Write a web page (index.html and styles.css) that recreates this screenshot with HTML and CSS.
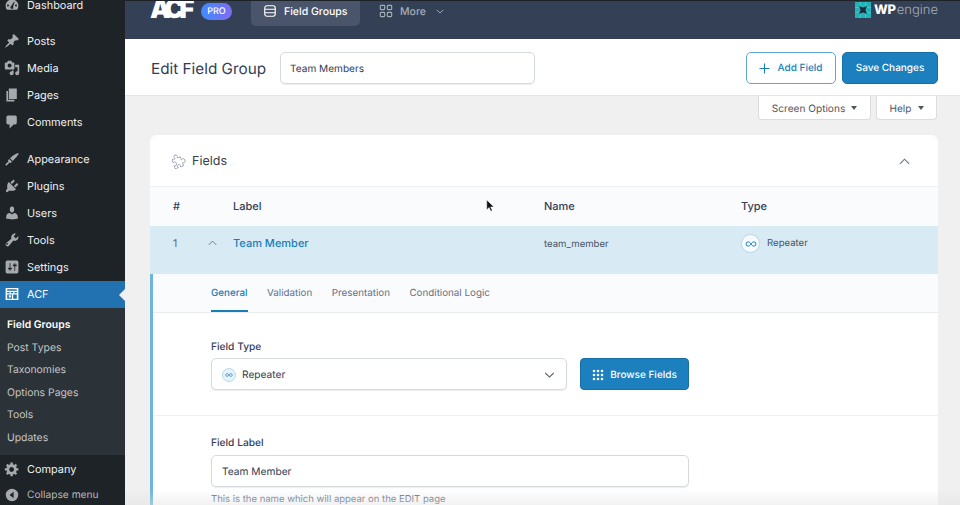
FILE: index.html
```html
<!DOCTYPE html>
<html lang="en">
<head>
    <meta charset="UTF-8">
    <title>Edit Field Group</title>
    <link rel="stylesheet" href="styles.css">
</head>
<body>
    <aside class="sidebar">
        <ul class="menu">
            <li class="menu-item"><svg viewBox="0 0 20 20"><path d="M10 3C5.600 3 2 6.600 2 11c0 1.900.7 3.700 1.800 5h12.400c1.100-1.300 1.800-3.100 1.800-5 0-4.400-3.600-8-8-8zM5 12a1.300 1.300 0 1 1 0-2.600A1.300 1.300 0 0 1 5 12zm5 3a2 2 0 0 1-1-3.700l3.500-5.300.8.400-2 5.800A2 2 0 0 1 10 15zm5-3a1.300 1.300 0 1 1 0-2.600 1.300 1.300 0 0 1 0 2.600z"/></svg>Dashboard</li>
            <li class="menu-sep"></li>
            <li class="menu-item"><svg viewBox="0 0 20 20"><path d="M10.440 3.020l1.820-1.820 6.360 6.350-1.830 1.820c-1.050-.68-2.480-.57-3.410.36l-.75.75c-.92.930-1.040 2.350-.35 3.410l-1.830 1.820-2.410-2.410-2.800 2.790c-.42.420-3.380 2.710-3.800 2.290s1.860-3.390 2.280-3.810l2.790-2.790L4.100 9.360l1.830-1.820c1.050.69 2.480.57 3.400-.36l.75-.75c.93-.92 1.050-2.350.36-3.410z"/></svg>Posts</li>
            <li class="menu-item"><svg viewBox="0 0 20 20"><path d="M13 11V4c0-.55-.45-1-1-1h-1.670L9 1H5L3.670 3H2c-.55 0-1 .45-1 1v7c0 .55.45 1 1 1h10c.55 0 1-.45 1-1zM7 4.500c1.380 0 2.500 1.120 2.500 2.500S8.380 9.500 7 9.500 4.500 8.380 4.500 7 5.620 4.500 7 4.500zM14 6h5v10.500c0 1.380-1.120 2.500-2.500 2.500S14 17.880 14 16.500s1.120-2.500 2.500-2.500c.17 0 .34.020.5.050V9h-3V6zm-4 8.050V13h2v3.500c0 1.380-1.120 2.500-2.500 2.500S7 17.880 7 16.500 8.120 14 9.500 14c.17 0 .34.020.5.050z"/></svg>Media</li>
            <li class="menu-item"><svg viewBox="0 0 20 20"><path d="M6 15V2h10v13H6zm-1 1h8v2H3V5h2v11z"/></svg>Pages</li>
            <li class="menu-item"><svg viewBox="0 0 20 20"><path d="M5 2h9c1.100 0 2 .9 2 2v7c0 1.100-.9 2-2 2h-2l-5 5v-5H5c-1.100 0-2-.9-2-2V4c0-1.100.9-2 2-2z"/></svg>Comments</li>
            <li class="menu-sep"></li>
            <li class="menu-item"><svg viewBox="0 0 20 20"><path d="M17.500 2.500l1 1C17 5.500 16 7.500 14 9l-3 3.500L7.500 9 11 6c2-1.500 4-2.500 6.500-3.500zM6.500 10l3.500 3.500L8.500 15 7 14.500l-4 4L1.500 17l4-4-.5-1.500z"/></svg>Appearance</li>
            <li class="menu-item"><svg viewBox="0 0 20 20"><path d="M13.110 4.360L9.870 7.600 8 5.730l3.240-3.240c.35-.34 1.050-.2 1.560.32.52.51.66 1.210.31 1.550zm-8 1.770l.91-1.120 9.010 9.010-1.190.84c-.71.710-2.630 1.160-3.820 1.160H6.140L4.900 17.260c-.59.590-1.540.59-2.120 0-.59-.58-.59-1.530 0-2.120l1.240-1.240v-3.880c0-1.130.41-3.050 1.120-3.760zm7.260 3.970l3.240-3.240c.34-.35 1.040-.21 1.550.31.52.51.66 1.210.31 1.550l-3.240 3.250z"/></svg>Plugins</li>
            <li class="menu-item"><svg viewBox="0 0 20 20"><path d="M10 9.250c-2.270 0-2.730-3.440-2.730-3.440C7 4.020 7.820 2 9.970 2c2.160 0 2.980 2.020 2.710 3.810 0 0-.41 3.440-2.680 3.440zm0 2.570L12.720 10c2.390 0 4.520 2.330 4.520 4.530v2.490s-3.650 1.130-7.240 1.130c-3.650 0-7.240-1.130-7.240-1.130v-2.490c0-2.250 1.940-4.480 4.430-4.480z"/></svg>Users</li>
            <li class="menu-item"><svg viewBox="0 0 20 20"><path d="M16.680 9.770c-1.340 1.340-3.300 1.670-4.950.99l-5.410 6.520c-.99.99-2.590.99-3.570 0-.99-.98-.99-2.580 0-3.570l6.520-5.420c-.68-1.650-.35-3.610.99-4.950 1.280-1.280 3.120-1.620 4.720-1.060l-2.890 2.890 2.820 2.820 2.860-2.870c.53 1.580.18 3.390-1.090 4.650zM4.660 15.610c.43-.43.43-1.120 0-1.560-.43-.43-1.120-.43-1.560 0-.43.43-.43 1.120 0 1.560.43.42 1.130.42 1.560 0z"/></svg>Tools</li>
            <li class="menu-item"><svg viewBox="0 0 20 20"><path d="M18 16V4c0-1.100-.9-2-2-2H4c-1.100 0-2 .9-2 2v12c0 1.100.9 2 2 2h12c1.100 0 2-.9 2-2zM8 11h1c.55 0 1 .45 1 1s-.45 1-1 1H8v1.500c0 .28-.22.5-.5.5s-.5-.22-.5-.5V13H6c-.55 0-1-.45-1-1s.45-1 1-1h1V5.500c0-.28.22-.5.5-.5s.5.22.5.5V11zm5-2h-1c-.55 0-1-.45-1-1s.45-1 1-1h1V5.500c0-.28.22-.5.5-.5s.5.22.5.5V7h1c.55 0 1 .45 1 1s-.45 1-1 1h-1v5.500c0 .28-.22.5-.5.5s-.5-.22-.5-.5V9z"/></svg>Settings</li>
            <li class="menu-item current"><svg viewBox="0 0 20 20"><path fill-rule="evenodd" d="M2 2.500h16v15H2zM4 7.500v1.500h3V7.500zm4.500 0v1.500h3V7.500zM13 7.500v1.500h3V7.500zM4 10.500V16h6v-5.500zm7.500 0V16H16v-5.500zM4 4v2h12V4zm2 7.500h3v3H6z"/></svg>ACF</li>
            <li>
                <ul class="submenu">
                    <li class="active">Field Groups</li>
                    <li>Post Types</li>
                    <li>Taxonomies</li>
                    <li>Options Pages</li>
                    <li>Tools</li>
                    <li>Updates</li>
                </ul>
            </li>
            <li class="menu-item"><svg viewBox="0 0 20 20"><path d="M18 12h-2.180c-.17.7-.44 1.350-.81 1.930l1.540 1.540-2.100 2.100-1.540-1.540c-.58.36-1.230.64-1.910.81V19H8v-2.180c-.68-.17-1.330-.45-1.910-.81l-1.540 1.540-2.120-2.120 1.540-1.540c-.36-.58-.64-1.230-.81-1.910H1V9.030h2.170c.17-.7.45-1.350.81-1.930L2.430 5.560l2.120-2.120L6.100 4.990c.58-.36 1.230-.64 1.900-.81V2h3v2.180c.68.17 1.330.45 1.910.81l1.540-1.540 2.120 2.120-1.540 1.540c.36.58.64 1.230.81 1.910H18V12zm-8.500 1.500c1.660 0 3-1.340 3-3s-1.340-3-3-3-3 1.340-3 3 1.340 3 3 3z"/></svg>Company</li>
            <li class="menu-item collapse"><svg viewBox="0 0 20 20"><path fill-rule="evenodd" d="M10 2.200a7.800 7.800 0 1 1 0 15.600 7.800 7.800 0 0 1 0-15.600zM12 6l-5 4 5 4z"/></svg>Collapse menu</li>
        </ul>
    </aside>

    <main class="main">
        <div class="topbar">
            <div class="brand">ACF</div>
            <span class="pro">PRO</span>
            <a class="nav-tab active">
                <svg viewBox="0 0 16 16" class="nav-icon"><rect x="2" y="2" width="12" height="12" rx="2.500"/><path d="M2 6h12M2 10h12"/></svg>
                Field Groups
            </a>
            <a class="nav-tab more">
                <svg viewBox="0 0 16 16" class="nav-icon"><rect x="1.500" y="1.500" width="5" height="5" rx="1"/><rect x="9.500" y="1.500" width="5" height="5" rx="1"/><rect x="1.500" y="9.500" width="5" height="5" rx="1"/><rect x="9.500" y="9.500" width="5" height="5" rx="1"/></svg>
                More
                <svg viewBox="0 0 10 6" class="more-caret"><path d="M1 1l4 4 4-4"/></svg>
            </a>
            <div class="wpe">
                <svg viewBox="0 0 16 16" class="wpe-mark"><rect width="16" height="16" fill="#1fb3b8"/><path d="M5.300 0v16M10.700 0v16M0 5.300h16M0 10.700h16" stroke="#5ad6d6" stroke-width=".6"/><path d="M4 4l4 1.500L12 4l-1.500 4 1.500 4-4-1.500L4 12l1.500-4z" fill="#1f2b3a"/></svg>
                <b>WP</b><span>engine</span>
            </div>
        </div>

        <header class="page-head">
            <h1>Edit Field Group</h1>
            <div class="title-input">Team Members</div>
            <a class="btn-outline"><svg viewBox="0 0 12 12"><path d="M6 .5v11M.5 6h11"/></svg>Add Field</a>
            <a class="btn-primary">Save Changes</a>
        </header>

        <div class="screen-links">
            <a class="screen-link screen-options">Screen Options<i></i></a>
            <a class="screen-link help">Help<i></i></a>
        </div>

        <section class="card">
            <div class="card-head">
                <svg viewBox="0 0 20 20" class="puzzle"><path transform="rotate(-20 10 10)" d="M3.500 6H7.500C6.500 3.500 6.500 2 9 2s2.500 1.500 1.500 4h4v4c2.500-1 4-.5 4 2s-1.500 3-4 2v4h-4c1-2.500.5-3.500-1.500-3.500s-2.500 1-1.500 3.500h-4v-4c2.500 1 3.500 0 3.500-2s-1-3-3.500-2z"/></svg>
                <h2>Fields</h2>
                <svg viewBox="0 0 12 7" class="chevron card-toggle"><path d="M1 6l5-5 5 5"/></svg>
            </div>

            <div class="field-row field-thead">
                <span>#</span>
                <span>Label</span>
                <span>Name</span>
                <span>Type</span>
            </div>

            <div class="field-row field-open">
                <span class="field-num">1</span>
                <span class="field-label"><svg viewBox="0 0 12 7" class="chevron"><path d="M1 6l5-5 5 5"/></svg>Team Member</span>
                <span class="field-name">team_member</span>
                <span class="field-type">
                    <span class="type-icon"><svg viewBox="0 0 16 8"><path d="M8 4C6.800 2.200 5.700 1.200 4.200 1.200a2.800 2.800 0 0 0 0 5.600C5.700 6.800 6.800 5.800 8 4c1.200-1.800 2.300-2.800 3.800-2.800a2.800 2.800 0 0 1 0 5.600C10.300 6.800 9.200 5.800 8 4z"/></svg></span>
                    Repeater
                </span>
            </div>

            <div class="settings">
                <nav class="tabs">
                    <a class="tab active">General</a>
                    <a class="tab">Validation</a>
                    <a class="tab">Presentation</a>
                    <a class="tab">Conditional Logic</a>
                </nav>

                <div class="setting setting-type">
                    <label>Field Type</label>
                    <div class="type-row">
                        <div class="select">
                            <span class="type-icon small"><svg viewBox="0 0 16 8"><path d="M8 4C6.800 2.200 5.700 1.200 4.200 1.200a2.800 2.800 0 0 0 0 5.600C5.700 6.800 6.800 5.800 8 4c1.200-1.800 2.300-2.800 3.800-2.800a2.800 2.800 0 0 1 0 5.600C10.300 6.800 9.200 5.800 8 4z"/></svg></span>
                            Repeater
                            <svg viewBox="0 0 12 7" class="chevron select-caret"><path d="M1 1l5 5 5-5"/></svg>
                        </div>
                        <a class="btn-browse">
                            <svg viewBox="0 0 12 12"><g><circle cx="2" cy="2" r="1.300"/><circle cx="6" cy="2" r="1.300"/><circle cx="10" cy="2" r="1.300"/><circle cx="2" cy="6" r="1.300"/><circle cx="6" cy="6" r="1.300"/><circle cx="10" cy="6" r="1.300"/><circle cx="2" cy="10" r="1.300"/><circle cx="6" cy="10" r="1.300"/><circle cx="10" cy="10" r="1.300"/></g></svg>
                            Browse Fields
                        </a>
                    </div>
                </div>

                <div class="setting setting-label">
                    <label>Field Label</label>
                    <div class="text-input">Team Member</div>
                    <p class="hint">This is the name which will appear on the EDIT page</p>
                </div>
            </div>
        </section>
    </main>

    <!-- screen recording leftovers -->
    <svg viewBox="0 0 12 18" class="cursor"><path d="M1 1v13l3.200-3 2.200 5 2-.9-2.200-4.900H10.500z"/></svg>
    <div class="bottom-fade"></div>
</body>
</html>
```

FILE: styles.css
```css
* {
    box-sizing: border-box;
}

html, body {
    height: 505px;
}

body {
    margin: 0;
    display: flex;
    overflow: hidden;
    background-color: #f0f0f1;
    color: #344054;
    font-family: Inter, "Liberation Sans", sans-serif;
    font-size: 11px;
    text-rendering: geometricPrecision;
}

ul {
    list-style: none;
    margin: 0;
    padding: 0;
}

/* sidebar */
.sidebar {
    width: 125px;
    flex-shrink: 0;
    height: 505px;
    overflow: hidden;
    background-color: #1d2327;
    color: #f0f0f1;
}

.menu {
    margin-top: -9px;
}

.menu-item {
    display: flex;
    align-items: center;
    height: 27.2px;
    padding-left: 4px;
    font-size: 10.9px;
    color: #eef0f1;
}

.menu-item svg {
    width: 16px;
    height: 16px;
    margin-right: 7px;
    fill: #a7aaad;
    flex-shrink: 0;
}

.menu-sep {
    height: 9px;
}

.menu-item.current {
    position: relative;
    background-color: #2271b1;
    color: #fff;
}

.menu-item.current svg {
    fill: #fff;
}

.menu-item.current::after {
    content: "";
    position: absolute;
    right: 0;
    top: 8px;
    border: 6px solid transparent;
    border-right-color: #f0f0f1;
    border-left-width: 0;
}

.submenu {
    background-color: #2c3338;
    height: 147px;
    padding: 6px 0 0 7px;
    font-size: 10.4px;
    color: #c3c4c7;
}

.submenu li {
    height: 22.5px;
    line-height: 22.5px;
}

.submenu .active {
    color: #fff;
    font-weight: 600;
}

.collapse {
    margin-top: -1px;
    color: #b4b9be;
    font-size: 10.2px;
}

/* top bar */
.main {
    flex: 1;
    min-width: 0;
}

.topbar {
    display: flex;
    height: 39px;
    background-color: #344055;
    border-top: 1px solid #1d2327;
    color: #fff;
    overflow: hidden;
}

.brand {
    width: 42px;
    height: 28px;
    margin: -5px 0 0 25px;
    font-size: 26px;
    line-height: 28px;
    font-weight: 900;
    letter-spacing: -4.8px;
}

.pro {
    width: 31px;
    height: 17px;
    margin: 2px 0 0 9px;
    border-radius: 9px;
    background: linear-gradient(90deg, #3e8bff, #7f6bf0);
    font-size: 9px;
    font-weight: 500;
    line-height: 17px;
    text-align: center;
}

.nav-tab {
    display: flex;
    align-items: center;
    gap: 7px;
    height: 25px;
    padding: 0 12px 5px;
    font-size: 10.5px;
    font-weight: 500;
    white-space: nowrap;
}

.nav-tab.active {
    width: 109px;
    margin-left: 19px;
    background-color: #4a556c;
    border-radius: 0 0 5px 5px;
}

.nav-tab.more {
    padding-left: 19px;
    color: #a5adbb;
}

.nav-icon {
    width: 14px;
    height: 14px;
    fill: none;
    stroke: currentColor;
    stroke-width: 1.300;
}

.more-caret {
    width: 8px;
    height: 5px;
    margin-left: 3px;
    fill: none;
    stroke: currentColor;
    stroke-width: 1.200;
}

.wpe {
    display: flex;
    align-items: center;
    gap: 3px;
    margin: 0 22px 0 auto;
    height: 18px;
    font-size: 13px;
}

.wpe-mark {
    width: 16px;
    height: 16px;
}

.wpe b {
    font-weight: 800;
    letter-spacing: -.2px;
}

.wpe span {
    margin-left: -2px;
    color: #a5adbb;
    font-weight: 300;
}

/* page header */
.page-head {
    display: flex;
    align-items: center;
    height: 57px;
    padding: 1px 22px 0 26px;
    background-color: #fff;
    border-bottom: 1px solid #e4e5e7;
}

h1 {
    width: 129px;
    margin: 1px 0 0;
    font-size: 15.3px;
    font-weight: 400;
    color: #344054;
    white-space: nowrap;
}

.title-input {
    width: 255px;
    height: 32px;
    padding-left: 9px;
    border: 1px solid #d5d9e0;
    border-radius: 5px;
    box-shadow: 0 1px 1px rgba(16, 24, 40, .08);
    font-size: 10.1px;
    line-height: 32px;
}

.btn-outline, .btn-primary {
    display: flex;
    align-items: center;
    justify-content: center;
    height: 32px;
    padding-top: 1px;
    border-radius: 5px;
    font-size: 10px;
    font-weight: 500;
}

.btn-outline {
    width: 90px;
    gap: 7px;
    margin-left: auto;
    border: 1px solid #5fa6cf;
    color: #1a7fb9;
}

.btn-outline svg {
    width: 11px;
    height: 11px;
    fill: none;
    stroke: #1a7fb9;
    stroke-width: 1.200;
}

.btn-primary {
    width: 96px;
    margin-left: 6px;
    background-color: #1b80bd;
    border: 1px solid #186fa6;
    color: #fff;
}

/* screen options */
.screen-links {
    display: flex;
    justify-content: flex-end;
    gap: 5px;
    height: 24px;
    padding-right: 23px;
}

.screen-link {
    display: flex;
    align-items: center;
    justify-content: center;
    gap: 6px;
    height: 24px;
    padding-top: 3px;
    background-color: #fff;
    border: 1px solid #dcdcde;
    border-top: 0;
    border-radius: 0 0 4px 4px;
    font-size: 10.1px;
    color: #50575e;
}

.screen-options {
    width: 113px;
}

.help {
    width: 61px;
}

.screen-link i {
    margin-top: -2px;
    border: 3px solid transparent;
    border-top: 4px solid #50575e;
    border-bottom: 0;
}

/* fields card */
.card {
    margin: 15px 22px 0 25px;
    height: 400px;
    background-color: #fff;
    border-radius: 7px 7px 0 0;
    overflow: hidden;
}

.card-head {
    display: flex;
    align-items: center;
    height: 51px;
    padding: 1px 28px 0 20px;
}

.card-head h2 {
    margin: 1px 0 0 6px;
    font-size: 12.5px;
    font-weight: 400;
    color: #344054;
}

.puzzle {
    width: 16px;
    height: 16px;
    fill: none;
    stroke: #8a94a6;
    stroke-width: 1.100;
    stroke-dasharray: 2.200 .5;
}

.chevron {
    fill: none;
    stroke: #667085;
    stroke-width: 1.200;
}

.card-toggle {
    width: 11px;
    height: 7px;
    margin-left: auto;
}

.field-row {
    display: grid;
    grid-template-columns: 60px 311px 197px 1fr;
    padding-left: 23px;
}

.field-thead {
    height: 40px;
    align-items: center;
    padding-bottom: 1px;
    background-color: #f9fbfd;
    border-top: 1px solid #eef1f4;
    font-size: 11px;
    font-weight: 500;
    color: #344054;
}

.field-open {
    height: 48px;
    padding-top: 11px;
    background-color: #d8ebf5;
    font-size: 9.6px;
    color: #475467;
}

.field-num {
    font-size: 10.5px;
    color: #5d6673;
}

.field-label {
    position: relative;
    margin-top: -1px;
    font-size: 11px;
    font-weight: 500;
    color: #1a7fb9;
}

.field-label .chevron {
    position: absolute;
    left: -25px;
    top: 4px;
    width: 9px;
    height: 6px;
}

.field-name {
    margin-top: 1.5px;
}

.field-type {
    display: flex;
    align-items: center;
    align-self: start;
    gap: 7px;
    margin-top: -3px;
}

.type-icon {
    display: flex;
    align-items: center;
    justify-content: center;
    width: 19px;
    height: 19px;
    background-color: #f5fbfe;
    border: 1px solid #b7d8eb;
    border-radius: 50%;
}

.type-icon svg {
    width: 12px;
    height: 6px;
    fill: none;
    stroke: #1a7fb9;
    stroke-width: 1.300;
}

.type-icon.small {
    width: 14px;
    height: 14px;
    background-color: #e6f3fa;
}

.type-icon.small svg {
    width: 8px;
    height: 4px;
}

/* field settings */
.settings {
    border-left: 3px solid #6db5dc;
}

.tabs {
    display: flex;
    gap: 19.5px;
    height: 39px;
    padding-left: 58px;
    background-color: #f9fbfd;
    border-bottom: 1px solid #e9ecef;
}

.tab {
    height: 38px;
    line-height: 40px;
    font-size: 9.8px;
    color: #667085;
}

.tab.active {
    color: #1a7fb9;
    border-bottom: 2px solid #1a7fb9;
    font-weight: 500;
}

.setting {
    padding: 26px 249px 0 58px;
}

.setting-type {
    height: 103px;
    border-bottom: 1px solid #eef0f3;
}

.setting-label {
    padding-top: 19px;
}

label {
    display: block;
    height: 19px;
    font-size: 10.2px;
    font-weight: 500;
    line-height: 16px;
    color: #344054;
}

.setting-label label {
    height: 20px;
}

.type-row {
    display: flex;
    gap: 13px;
}

.select, .text-input {
    display: flex;
    align-items: center;
    height: 32px;
    padding: 1px 0 0 10px;
    background-color: #fff;
    border: 1px solid #d5d9e0;
    border-radius: 5px;
    box-shadow: 0 1px 1px rgba(16, 24, 40, .08);
    font-size: 10.2px;
}

.select {
    flex: 1;
    gap: 6px;
}

.select-caret {
    width: 11px;
    height: 6px;
    margin: 0 11px 0 auto;
    stroke: #475467;
}

.btn-browse {
    display: flex;
    align-items: center;
    justify-content: center;
    gap: 6px;
    width: 109px;
    height: 32px;
    padding-top: 1px;
    background-color: #1b80bd;
    border: 1px solid #186fa6;
    border-radius: 4px;
    color: #fff;
    font-size: 10px;
    font-weight: 500;
}

.btn-browse svg {
    width: 12px;
    height: 12px;
    fill: #fff;
}

.hint {
    margin: 7px 0 0;
    font-size: 9.5px;
    color: #667085;
}

/* on top of the page */
.cursor {
    position: absolute;
    left: 486px;
    top: 199px;
    width: 9px;
    height: 14px;
    fill: #111;
    stroke: #fff;
    stroke-width: .6;
}

.bottom-fade {
    position: absolute;
    left: 125px;
    right: 0;
    bottom: 0;
    height: 16px;
    background: linear-gradient(rgba(225, 225, 225, 0), rgba(225, 225, 225, .45));
}
```
